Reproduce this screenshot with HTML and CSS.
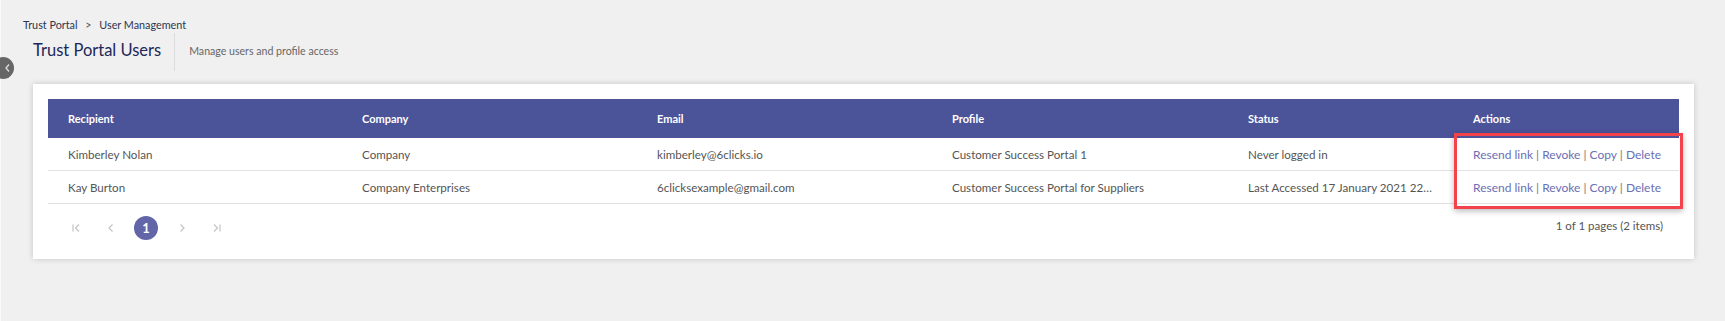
FILE: index.html
```html
<!DOCTYPE html>
<html lang="en">
<head>
  <meta charset="UTF-8">
  <title>Trust Portal Users</title>
  <link rel="stylesheet" href="styles.css">
</head>
<body>
  <div class="page">
    <div class="side-toggle">
      <svg width="8" height="10" viewBox="0 0 8 10"><path d="M5 1.5 L2 5 L5 8.5" fill="none" stroke="#ddd" stroke-width="1.3"/></svg>
    </div>

    <div class="breadcrumb">
      <span>Trust Portal</span>
      <span class="sep">&gt;</span>
      <span>User Management</span>
    </div>

    <div class="page-head">
      <h1>Trust Portal Users</h1>
      <div class="subtitle">Manage users and profile access</div>
    </div>

    <div class="card">
      <div class="table-wrap">
        <table class="grid">
          <colgroup>
            <col style="width:294px">
            <col style="width:295px">
            <col style="width:295px">
            <col style="width:296px">
            <col style="width:225px">
            <col style="width:226px">
          </colgroup>
          <thead>
            <tr>
              <th>Recipient</th>
              <th>Company</th>
              <th>Email</th>
              <th>Profile</th>
              <th>Status</th>
              <th>Actions</th>
            </tr>
          </thead>
          <tbody>
            <tr>
              <td>Kimberley Nolan</td>
              <td>Company</td>
              <td>kimberley@6clicks.io</td>
              <td>Customer Success Portal 1</td>
              <td>Never logged in</td>
              <td class="actions"><a href="#">Resend link</a> | <a href="#">Revoke</a> | <a href="#">Copy</a> | <a href="#">Delete</a></td>
            </tr>
            <tr>
              <td>Kay Burton</td>
              <td>Company Enterprises</td>
              <td>6clicksexample@gmail.com</td>
              <td>Customer Success Portal for Suppliers</td>
              <td>Last Accessed 17 January 2021 22:14</td>
              <td class="actions"><a href="#">Resend link</a> | <a href="#">Revoke</a> | <a href="#">Copy</a> | <a href="#">Delete</a></td>
            </tr>
          </tbody>
        </table>
        <div class="highlight"></div>

        <div class="pager">
          <div class="pager-nav">
            <span class="pg-btn">
              <svg width="10" height="10" viewBox="0 0 10 10"><path d="M2 1.5 V8.5 M8 1.5 L4.5 5 L8 8.5" fill="none" stroke="#c4c4c4" stroke-width="1.2"/></svg>
            </span>
            <span class="pg-btn">
              <svg width="10" height="10" viewBox="0 0 10 10"><path d="M6.5 1.5 L3 5 L6.5 8.5" fill="none" stroke="#c4c4c4" stroke-width="1.2"/></svg>
            </span>
            <span class="pg-num">1</span>
            <span class="pg-btn">
              <svg width="10" height="10" viewBox="0 0 10 10"><path d="M3.5 1.5 L7 5 L3.5 8.5" fill="none" stroke="#c4c4c4" stroke-width="1.2"/></svg>
            </span>
            <span class="pg-btn">
              <svg width="10" height="10" viewBox="0 0 10 10"><path d="M2 1.5 L5.5 5 L2 8.5 M8 1.5 V8.5" fill="none" stroke="#c4c4c4" stroke-width="1.2"/></svg>
            </span>
          </div>
          <div class="pager-info">1 of 1 pages (2 items)</div>
        </div>
      </div>
    </div>
  </div>
</body>
</html>
```

FILE: styles.css
```css
body {
  margin: 0;
  background: #f0f0f0;
  font-family: Lato, "Open Sans", Arial, sans-serif;
  color: #555;
}

.page {
  position: relative;
  min-height: 321px;
  box-sizing: border-box;
  border-left: 1px solid #fafafa;
  padding: 18px 31px 0 22px;
}

.side-toggle {
  position: absolute;
  left: -9px;
  top: 57px;
  width: 22px;
  height: 22px;
  border-radius: 50%;
  background: #666;
  display: flex;
  align-items: center;
  justify-content: flex-end;
  padding-right: 2px;
  box-sizing: border-box;
}

.breadcrumb {
  font-size: 10.8px;
  color: #2d3550;
  height: 14px;
  line-height: 14px;
}

.breadcrumb .sep {
  margin: 0 5px;
  color: #555;
}

.page-head {
  display: flex;
  align-items: center;
  height: 38px;
  margin-top: 1px;
  padding-left: 10px;
}

.page-head h1 {
  margin: 0;
  font-size: 16.5px;
  font-weight: 400;
  color: #22275a;
  padding-right: 13px;
  height: 38px;
  line-height: 34px;
  border-right: 1px solid #dcdcdc;
}

.subtitle {
  font-size: 10.6px;
  color: #666;
  padding-left: 14px;
  padding-bottom: 2px;
}

.card {
  margin: 13px 0 0 10px;
  background: #fff;
  padding: 15px;
  box-shadow: 0 0 6px rgba(0, 0, 0, 0.18);
}

.table-wrap {
  position: relative;
}

.grid {
  width: 100%;
  border-collapse: collapse;
  table-layout: fixed;
  font-size: 11.6px;
}

.grid th {
  background: #4b5399;
  color: #fff;
  font-weight: 700;
  text-align: left;
  height: 39px;
  padding: 0 20px;
  font-size: 11px;
}

.grid td {
  height: 32px;
  padding: 0 20px;
  border-bottom: 1px solid #e2e2e2;
  color: #555;
  white-space: nowrap;
  overflow: hidden;
  text-overflow: ellipsis;
}

.grid td.actions {
  color: #777;
  font-size: 12px;
  overflow: visible;
}

.grid td.actions a {
  color: #6b6fb5;
  text-decoration: none;
}

.highlight {
  position: absolute;
  top: 34px;
  right: -4px;
  width: 229px;
  height: 76px;
  box-sizing: border-box;
  border: 3px solid #f2434c;
  box-shadow: 0 2px 6px rgba(0, 0, 0, 0.28);
  pointer-events: none;
}

.pager {
  display: flex;
  justify-content: space-between;
  align-items: center;
  padding: 12px 16px 4px 16px;
}

.pager-nav {
  display: flex;
  align-items: center;
  gap: 12px;
}

.pg-btn {
  width: 23px;
  height: 23px;
  display: flex;
  align-items: center;
  justify-content: center;
}

.pg-num {
  width: 24px;
  height: 24px;
  border-radius: 50%;
  background: #6266a8;
  color: #fff;
  font-size: 13px;
  font-weight: 700;
  display: flex;
  align-items: center;
  justify-content: center;
}

.pager-info {
  font-size: 11.5px;
  color: #555;
  margin-top: -6px;
}
```
